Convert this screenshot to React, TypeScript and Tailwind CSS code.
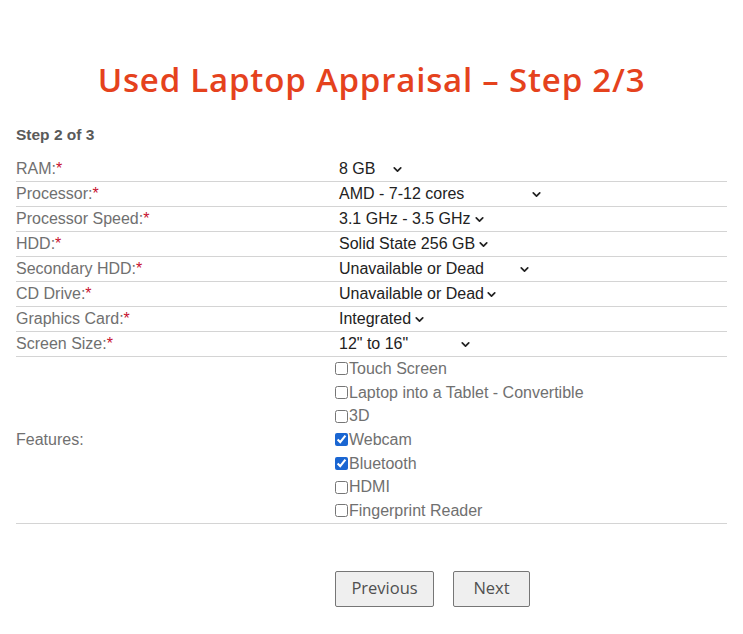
import { ChevronDown } from 'lucide-react';

const selects = [
  { label: 'RAM:', value: '8 GB', width: 'w-[71px]' },
  { label: 'Processor:', value: 'AMD - 7-12 cores', width: 'w-[210px]' },
  { label: 'Processor Speed:', value: '3.1 GHz - 3.5 GHz', width: 'w-[153px]' },
  { label: 'HDD:', value: 'Solid State 256 GB', width: 'w-[157px]' },
  { label: 'Secondary HDD:', value: 'Unavailable or Dead', width: 'w-[198px]' },
  { label: 'CD Drive:', value: 'Unavailable or Dead', width: 'w-[165px]' },
  { label: 'Graphics Card:', value: 'Integrated', width: 'w-[93px]' },
  { label: 'Screen Size:', value: '12" to 16"', width: 'w-[139px]' },
];

const features = [
  { name: 'Touch Screen', checked: false },
  { name: 'Laptop into a Tablet - Convertible', checked: false },
  { name: '3D', checked: false },
  { name: 'Webcam', checked: true },
  { name: 'Bluetooth', checked: true },
  { name: 'HDMI', checked: false },
  { name: 'Fingerprint Reader', checked: false },
];

const App = () => {
  return (
    <div className="min-h-[634px] bg-white px-4 pt-[57px] font-['Liberation_Sans',Arial,sans-serif]">
      <h1 className="text-center font-['Open_Sans',sans-serif] text-[33px] font-semibold leading-[46px] tracking-[0.8px] text-[#e5421d]">
        Used Laptop Appraisal – Step 2/3
      </h1>

      <div className="mt-[22px] text-[15.5px] font-bold leading-[20px] text-[#5a5a5a]">Step 2 of 3</div>

      {/* Form table */}
      <div className="mt-[12px]">
        {selects.map((row) => (
          <div key={row.label} className="flex h-[25px] items-center border-b border-[#d4d4d4] text-[16px]">
            <div className="w-[319px] text-[#707070]">
              {row.label}
              <span className="text-[#c8102e]">*</span>
            </div>
            <div className={`flex ${row.width} items-center justify-between pl-[4px] pr-[2px] text-[#222]`}>
              <span>{row.value}</span>
              <ChevronDown size={13} strokeWidth={3.2} className="text-[#222]" />
            </div>
          </div>
        ))}

        <div className="flex items-center border-b border-[#d4d4d4] text-[16px]">
          <div className="w-[319px] text-[#707070]">Features:</div>
          <div className="flex flex-col">
            {features.map((f) => (
              <label key={f.name} className="flex h-[23.7px] items-center text-[#707070]">
                <input
                  type="checkbox"
                  defaultChecked={f.checked}
                  className="m-0 mr-[1px] h-[13px] w-[13px] accent-[#1a66d2]"
                />
                {f.name}
              </label>
            ))}
          </div>
        </div>
      </div>

      {/* Buttons */}
      <div className="mt-[47px] flex gap-[19px] pl-[319px]">
        <button className="h-[36px] w-[99px] rounded-[2px] border border-[#767676] bg-[#efefef] font-['Open_Sans',sans-serif] text-[16.5px] text-[#505050]">
          Previous
        </button>
        <button className="h-[36px] w-[77px] rounded-[2px] border border-[#767676] bg-[#efefef] font-['Open_Sans',sans-serif] text-[16.5px] text-[#505050]">
          Next
        </button>
      </div>
    </div>
  );
};

export default App;
